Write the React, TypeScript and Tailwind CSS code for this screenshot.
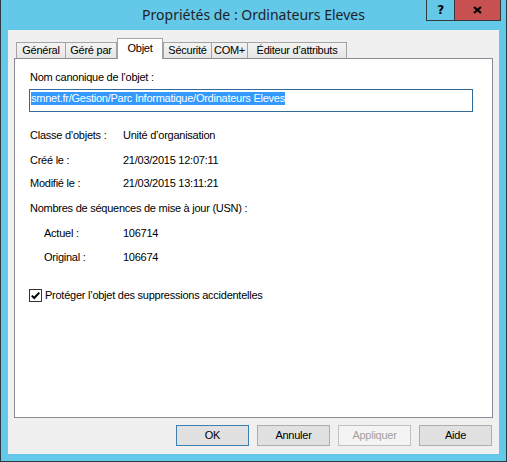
import React from 'react';

type Tab = { label: string; width: string; selected?: boolean };

const tabs: Tab[] = [
  { label: 'Général', width: 'w-[50px]' },
  { label: 'Géré par', width: 'w-[52px]' },
  { label: 'Objet', width: 'w-[46px]', selected: true },
  { label: 'Sécurité', width: 'w-[49px]' },
  { label: 'COM+', width: 'w-[37px]' },
  { label: 'Éditeur d’attributs', width: 'w-[100px]' },
];

const infoRows = [
  { label: 'Classe d’objets :', value: 'Unité d’organisation', gap: 'mt-[17px]' },
  { label: 'Créé le :', value: '21/03/2015 12:07:11', gap: 'mt-[12px]' },
  { label: 'Modifié le :', value: '21/03/2015 13:11:21', gap: 'mt-[10px]' },
];

const usnRows = [
  { label: 'Actuel :', value: '106714', gap: 'mt-[12px]' },
  { label: 'Original :', value: '106674', gap: 'mt-[11px]' },
];

function DialogButton({ label, variant }: { label: string; variant?: 'default' | 'disabled' }) {
  const tone =
    variant === 'default'
      ? 'border-[#3c7fb1] bg-[#e1e1e1] text-black'
      : variant === 'disabled'
        ? 'border-[#bfbfbf] bg-[#f4f4f4] text-[#a0a0a0]'
        : 'border-[#adadad] bg-[#e1e1e1] text-black';
  return (
    <div className={`flex h-[21px] w-[73px] items-center justify-center border ${tone}`}>
      {label}
    </div>
  );
}

export default function App() {
  return (
    <div className="flex h-[462px] w-[507px] flex-col border-x border-b border-[#2e3a42] bg-[#64c8e9] font-['Liberation_Sans',Arial,sans-serif] text-[11px] leading-[13px] tracking-[-0.25px] text-black">
      {/* title bar */}
      <div className="grid h-[30px] grid-cols-[1fr_auto_1fr]">
        <div />
        <div className="flex items-center pb-px font-['Noto_Sans',sans-serif] text-[14px] leading-[18px] tracking-normal text-[#1f2326]">
          Propriétés de : Ordinateurs Eleves
        </div>
        <div className="flex items-start justify-end pr-[5px]">
          <div className="flex h-[21px] w-[28px] items-center justify-center border-b border-l border-[#33393d] font-['DejaVu_Sans',sans-serif] text-[12px] font-bold text-black">
            ?
          </div>
          <div className="flex h-[21px] w-[47px] items-center justify-center border-x border-b border-[#33393d] bg-[#c75050]">
            <svg width="9" height="8" viewBox="0 0 9 8">
              <path d="M1 1 L8 7 M8 1 L1 7" stroke="#000" strokeWidth="2.2" />
            </svg>
          </div>
        </div>
      </div>

      {/* client area */}
      <div className="mx-[7px] flex h-[424px] flex-col bg-[#f0f0f0] px-[6px] pt-[8px]">
        <div className="flex h-[20px] items-end pl-[2px]">
          {tabs.map((tab, i) =>
            tab.selected ? (
              <div
                key={tab.label}
                className={`relative z-10 -mb-px flex h-[21px] ${tab.width} justify-center border-x border-t border-[#a3a3a3] bg-white pt-[3px]`}
              >
                {tab.label}
              </div>
            ) : (
              <div
                key={tab.label}
                className={`${i > 0 && !tabs[i - 1].selected ? '-ml-px' : ''} flex h-[16px] ${tab.width} items-center justify-center border-x border-t border-[#a3a3a3] bg-gradient-to-b from-[#f3f3f3] to-[#e6e6e6] pb-px`}
              >
                {tab.label}
              </div>
            ),
          )}
        </div>

        <div className="flex h-[360px] flex-col border border-[#898c95] bg-white pl-[15px] pt-[12px]">
          <div>Nom canonique de l’objet :</div>
          <div className="-ml-px mt-[5px] flex h-[23px] w-[444px] items-start border border-[#346a97] pl-px pt-[2px]">
            <span className="bg-[#3399ff] text-white">smnet.fr/Gestion/Parc Informatique/Ordinateurs Eleves</span>
          </div>

          {infoRows.map(row => (
            <div key={row.label} className={`flex ${row.gap}`}>
              <span className="w-[93px]">{row.label}</span>
              <span>{row.value}</span>
            </div>
          ))}

          <div className="mt-[12px]">Nombres de séquences de mise à jour (USN) :</div>

          {usnRows.map(row => (
            <div key={row.label} className={`flex ${row.gap}`}>
              <span className="ml-[14px] w-[79px]">{row.label}</span>
              <span>{row.value}</span>
            </div>
          ))}

          <div className="-ml-px mt-[25px] flex items-center gap-[3px]">
            <div className="flex h-[13px] w-[13px] items-center justify-center border border-[#333333] bg-white">
              <svg width="11" height="11" viewBox="0 0 11 11">
                <path d="M1.8 5.6 L4.2 8 L9.3 2.6" fill="none" stroke="#000" strokeWidth="2" />
              </svg>
            </div>
            <span>Protéger l’objet des suppressions accidentelles</span>
          </div>
        </div>

        <div className="mr-px mt-[7px] flex justify-end gap-[8px]">
          <DialogButton label="OK" variant="default" />
          <DialogButton label="Annuler" />
          <DialogButton label="Appliquer" variant="disabled" />
          <DialogButton label="Aide" />
        </div>
      </div>
    </div>
  );
}
